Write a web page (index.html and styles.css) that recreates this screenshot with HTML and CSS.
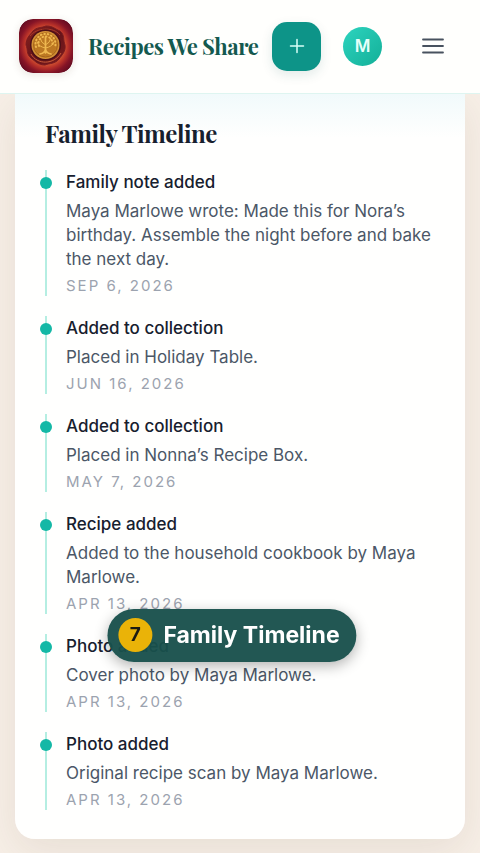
FILE: index.html
```html
<!DOCTYPE html>
<html lang="en">
<head>
<meta charset="utf-8">
<meta name="viewport" content="width=device-width, initial-scale=1">
<title>Recipes We Share</title>
<link rel="stylesheet" href="styles.css">
</head>
<body>
<header class="topbar">
  <a class="brand" href="#">
    <svg class="logo" viewBox="0 0 54 54" aria-hidden="true">
      <defs>
        <radialGradient id="velvet" r="0.62"><stop offset="0.5" stop-color="#dc6234"/><stop offset="0.66" stop-color="#b63029"/><stop offset="0.8" stop-color="#861426"/><stop offset="1" stop-color="#5c0a20"/></radialGradient>
        <linearGradient id="wax" x1="0" y1="0" x2="1" y2="1"><stop offset="0" stop-color="#8c241e"/><stop offset="0.5" stop-color="#64131a"/><stop offset="1" stop-color="#7f1d1c"/></linearGradient>
        <radialGradient id="gold"><stop offset="0" stop-color="#b97824"/><stop offset="0.75" stop-color="#bd7822"/><stop offset="1" stop-color="#d9983a"/></radialGradient>
      </defs>
      <rect width="54" height="54" rx="14" fill="url(#velvet)"/>
      <path d="M27 7C34 7 36 10 41 12C46 16 44 21 46 26C47 32 43 36 40 40C36 45 31 44 26 46C19 46 16 42 12 39C7 35 9 30 7 26C7 19 11 16 14 12C18 8 22 9 27 7Z" fill="url(#wax)" stroke="#7a1a20" stroke-width="1"/>
      <path d="M12 35C18 46 35 46 42 34" fill="none" stroke="#c85a3a" stroke-width="1"/>
      <path d="M11 17C17 9 34 7 41 16" fill="none" stroke="#a53a2a" stroke-width="1"/>
      <circle cx="26.500" cy="26" r="15.500" fill="#4c0f16"/>
      <circle cx="26.500" cy="26" r="14" fill="url(#gold)"/>
      <circle cx="26.500" cy="26" r="12" fill="none" stroke="#9a5a18" stroke-width="0.8"/>
      <g fill="none" stroke="#efb850" stroke-linecap="round">
        <path d="M26.500 18V34M21 35Q26 34 26.500 30Q27 34 32 35" stroke-width="1.700"/>
        <path d="M26.500 29Q20 28 18 23M26.500 26Q22 24 21 19M26.500 29Q33 28 35 23M26.500 26Q31 24 32 19" stroke-width="1"/>
        <path d="M17 28A10 10 0 1 1 36 28" stroke-width="2" stroke-dasharray="0.6 2.900"/>
        <path d="M20 27A7 7 0 1 1 33 27" stroke-width="2" stroke-dasharray="0.5 3"/>
      </g>
    </svg>
    <span class="brand-name">Recipes We Share</span>
  </a>
  <button class="add" type="button" aria-label="Add recipe">
    <svg viewBox="0 0 16 16" width="16" height="16" aria-hidden="true"><path d="M8 1.500V14.500M1.500 8H14.500" stroke="currentColor" stroke-width="1.500" stroke-linecap="round"/></svg>
  </button>
  <button class="avatar" type="button" aria-label="Account">M</button>
  <button class="menu" type="button" aria-label="Menu">
    <svg viewBox="0 0 24 16" width="24" height="16" aria-hidden="true"><path d="M2 1.500H22M2 8H22M2 14.500H22" stroke="currentColor" stroke-width="1.800" stroke-linecap="round"/></svg>
  </button>
</header>
<main class="page">
  <section class="card" aria-labelledby="timeline-title">
    <h2 id="timeline-title">Family Timeline</h2>
    <ol class="timeline">
      <li><h3>Family note added</h3><p>Maya Marlowe wrote: Made this for Nora’s birthday. Assemble the night before and bake the next day.</p><time datetime="2026-09-06">Sep 6, 2026</time></li>
      <li><h3>Added to collection</h3><p>Placed in Holiday Table.</p><time datetime="2026-06-16">Jun 16, 2026</time></li>
      <li><h3>Added to collection</h3><p>Placed in Nonna’s Recipe Box.</p><time datetime="2026-05-07">May 7, 2026</time></li>
      <li><h3>Recipe added</h3><p>Added to the household cookbook by Maya Marlowe.</p><time datetime="2026-04-13">Apr 13, 2026</time></li>
      <li><h3>Photo added</h3><p>Cover photo by Maya Marlowe.</p><time datetime="2026-04-13">Apr 13, 2026</time></li>
      <li><h3>Photo added</h3><p>Original recipe scan by Maya Marlowe.</p><time datetime="2026-04-13">Apr 13, 2026</time></li>
    </ol>
  </section>
</main>
<div class="step"><span class="step-number">7</span><span>Family Timeline</span></div>
</body>
</html>
```
FILE: styles.css
```css
* { box-sizing: border-box; }

body {
  margin: 0;
  min-height: 100vh;
  background: #f7efe7;
  color: #17202e;
  font-family: Inter, "Liberation Sans", sans-serif;
  font-size: 17px;
  line-height: 24px;
}

h2, h3, p, ol { margin: 0; padding: 0; }

button {
  display: flex;
  align-items: center;
  justify-content: center;
  flex: none;
  padding: 0;
  border: 0;
  font: inherit;
}

.topbar {
  position: sticky;
  top: 0;
  z-index: 2;
  display: flex;
  align-items: center;
  padding: 19px 30px 20px 19px;
  background: #fffffd;
  border-bottom: 1px solid #def5f0;
}

.brand {
  display: flex;
  flex: 1;
  align-items: center;
  gap: 15px;
  color: #14594f;
  text-decoration: none;
  white-space: nowrap;
}

.logo {
  flex: none;
  width: 54px;
  height: 54px;
  border-radius: 14px;
  box-shadow: 0 2px 8px rgba(70, 40, 20, 0.12);
}

.brand-name, h2 {
  font-family: "Playfair Display", "Liberation Serif", serif;
  font-weight: 700;
  letter-spacing: -0.02em;
}

.brand-name { font-size: 22px; }

.add {
  width: 49px;
  height: 49px;
  border-radius: 15px;
  background: #0d9488;
  color: #d8fff7;
  box-shadow: 0 4px 12px rgba(20, 80, 80, 0.12);
}

.avatar {
  width: 39px;
  height: 39px;
  margin-left: 22px;
  border-radius: 50%;
  background: linear-gradient(135deg, #2dd4bf, #13af98);
  color: #e6fffa;
  font-weight: 600;
}

.menu {
  width: 34px;
  height: 40px;
  margin-left: 34px;
  background: transparent;
  color: #48525f;
}

.page { padding: 0 15px 15px; }

.card {
  padding: 23px 30px 29px;
  border-radius: 0 0 20px 20px;
  background: linear-gradient(#f1fafb, #fffffe 44px);
  box-shadow: 0 12px 40px rgba(100, 75, 45, 0.1);
}

h2 {
  margin-bottom: 21px;
  font-size: 24px;
  line-height: 32px;
}

.timeline {
  display: grid;
  gap: 20px;
  list-style: none;
}

.timeline li {
  position: relative;
  display: grid;
  gap: 5px;
  padding-left: 19px;
  border-left: 2px solid #b5eee2;
}

.timeline li::before {
  content: "";
  position: absolute;
  top: 7px;
  left: -7px;
  width: 12px;
  height: 12px;
  border-radius: 50%;
  background: #14b8a6;
}

h3 {
  font-size: 17px;
  line-height: 24px;
  font-weight: 500;
}

p { color: #4b5767; }

time {
  color: #9ca3af;
  font-size: 15px;
  line-height: 20px;
  letter-spacing: 2px;
  text-transform: uppercase;
}

.step {
  position: fixed;
  bottom: 191px;
  left: 50%;
  z-index: 3;
  display: flex;
  align-items: center;
  gap: 11px;
  margin-left: -8px;
  padding: 9px 17px 10px 11px;
  border-radius: 27px;
  transform: translateX(-50%);
  background: rgba(25, 80, 76, 0.96);
  color: #fff;
  box-shadow: 0 4px 14px rgba(0, 0, 0, 0.3);
  font-size: 23px;
  font-weight: 700;
  white-space: nowrap;
}

.step-number {
  display: grid;
  place-items: center;
  width: 34px;
  height: 34px;
  border-radius: 50%;
  background: #eab308;
  color: #1c1a12;
  font-size: 19px;
}
```
